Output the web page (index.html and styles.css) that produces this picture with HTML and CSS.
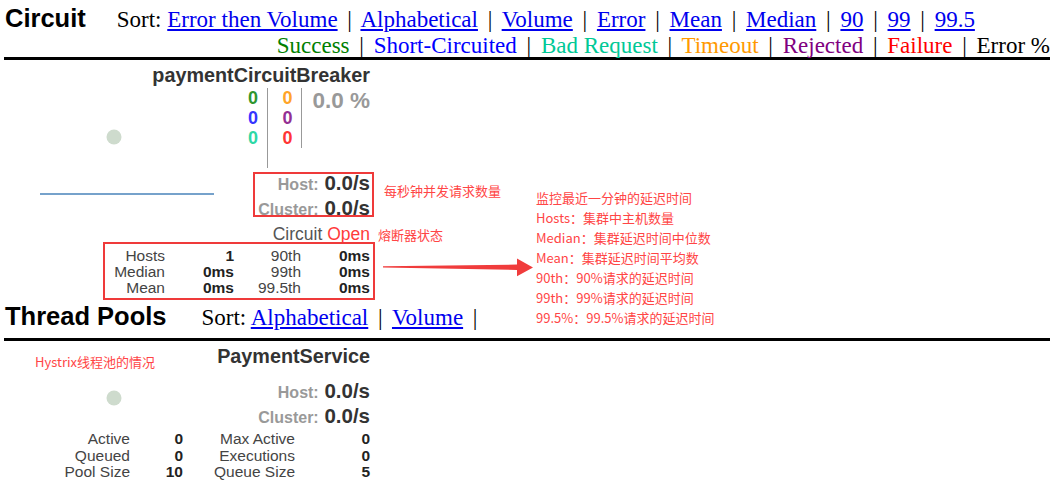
FILE: index.html
```html
<!DOCTYPE html>
<html>
<head>
<meta charset="utf-8">
<title>Hystrix Dashboard</title>
<link rel="stylesheet" href="styles.css">
</head>
<body>
<header class="section-head">
  <div class="head-row">
    <h2 class="section-title title-circuit">Circuit</h2>
    <div class="sort">Sort: <a href="#">Error then Volume</a> <span class="sep">|</span> <a href="#">Alphabetical</a> <span class="sep">|</span> <a href="#">Volume</a> <span class="sep">|</span> <a href="#">Error</a> <span class="sep">|</span> <a href="#">Mean</a> <span class="sep">|</span> <a href="#">Median</a> <span class="sep">|</span> <a href="#">90</a> <span class="sep">|</span> <a href="#">99</a> <span class="sep">|</span> <a href="#">99.5</a></div>
  </div>
  <div class="legend"><span class="l-success">Success</span> <span class="sep">|</span> <span class="l-short">Short-Circuited</span> <span class="sep">|</span> <span class="l-bad">Bad Request</span> <span class="sep">|</span> <span class="l-timeout">Timeout</span> <span class="sep">|</span> <span class="l-rejected">Rejected</span> <span class="sep">|</span> <span class="l-failure">Failure</span> <span class="sep">|</span> <span class="l-error">Error %</span></div>
</header>

<section class="monitor">
  <svg class="chart" width="370" height="160" viewBox="0 0 370 160">
    <circle cx="110" cy="77" r="7.5" fill="#cedbcd"/>
    <line x1="36" y1="134" x2="210" y2="134" stroke="#76a2cb" stroke-width="2"/>
  </svg>
  <div class="monitor-name">paymentCircuitBreaker</div>
  <div class="counters">
    <div class="counter-col col-a">
      <div class="c-success">0</div>
      <div class="c-short">0</div>
      <div class="c-bad">0</div>
      <div>&nbsp;</div>
    </div>
    <div class="counter-col col-b">
      <div class="c-timeout">0</div>
      <div class="c-rejected">0</div>
      <div class="c-failure">0</div>
    </div>
    <div class="err-pct">0.0 %</div>
  </div>
  <div class="rates">
    <div><span class="rate-label">Host:</span> <span class="rate-value">0.0/s</span></div>
    <div><span class="rate-label">Cluster:</span> <span class="rate-value">0.0/s</span></div>
  </div>
  <div class="circuit-status">Circuit <span class="open">Open</span></div>
  <div class="stats stats-circuit">
    <span class="lbl">Hosts</span><span class="val">1</span><span class="lbl">90th</span><span class="val">0ms</span>
    <span class="lbl">Median</span><span class="val">0ms</span><span class="lbl">99th</span><span class="val">0ms</span>
    <span class="lbl">Mean</span><span class="val">0ms</span><span class="lbl">99.5th</span><span class="val">0ms</span>
  </div>
</section>

<header class="section-head">
  <div class="head-row pools-row">
    <h2 class="section-title title-pools">Thread Pools</h2>
    <div class="sort">Sort: <a href="#">Alphabetical</a> <span class="sep">|</span> <a href="#">Volume</a> <span class="sep">|</span></div>
  </div>
</header>

<section class="monitor">
  <svg class="chart" width="370" height="100" viewBox="0 0 370 100">
    <circle cx="110" cy="57" r="7.5" fill="#cedbcd"/>
  </svg>
  <div class="monitor-name">PaymentService</div>
  <div class="rates pool-rates">
    <div><span class="rate-label">Host:</span> <span class="rate-value">0.0/s</span></div>
    <div><span class="rate-label">Cluster:</span> <span class="rate-value">0.0/s</span></div>
  </div>
  <div class="stats stats-pool">
    <span class="lbl">Active</span><span class="val">0</span><span class="lbl">Max Active</span><span class="val">0</span>
    <span class="lbl">Queued</span><span class="val">0</span><span class="lbl">Executions</span><span class="val">0</span>
    <span class="lbl">Pool Size</span><span class="val">10</span><span class="lbl">Queue Size</span><span class="val">5</span>
  </div>
</section>

<div class="notes">
  <div class="box box-rate"></div>
  <div class="box box-stats"></div>
  <svg class="arrow" width="160" height="24" viewBox="378 256 160 24">
    <polygon points="383,266.3 517,264.6 517,258.5 533,267.5 517,276.2 517,270 383,267.4" fill="#f03c3c"/>
  </svg>
  <div class="note note-rate">每秒钟并发请求数量</div>
  <div class="note note-circuit">熔断器状态</div>
  <div class="note note-latency">监控最近一分钟的延迟时间<br>Hosts：集群中主机数量<br>Median：集群延迟时间中位数<br>Mean：集群延迟时间平均数<br>90th：90%请求的延迟时间<br>99th：99%请求的延迟时间<br>99.5%：99.5%请求的延迟时间</div>
  <div class="note note-pool">Hystrix线程池的情况</div>
</div>
</body>
</html>
```
FILE: styles.css
```css
* { box-sizing: border-box; }

body {
  margin: 3px 2px 0 4px;
  font-family: "Liberation Sans", Arial, sans-serif;
  color: #333;
  background: #fff;
}

.section-head {
  border-bottom: 3px solid #000;
}

.head-row {
  display: flex;
  align-items: baseline;
  white-space: nowrap;
  line-height: 30px;
}

.pools-row {
  line-height: 40px;
}

.section-title {
  margin: 0;
  padding-left: 1px;
  font-family: "Liberation Sans", Arial, sans-serif;
  font-weight: bold;
  font-size: 25.5px;
  color: #000;
}

.title-circuit { margin-right: 31px; }
.title-pools { margin-right: 35px; }

.sort,
.legend {
  font-family: "Liberation Serif", "Times New Roman", serif;
  font-size: 23px;
  color: #000;
}

.sort a { color: #0000ee; }

.sep { margin: 0 4px; color: #000; }

.legend {
  text-align: right;
  line-height: 22px;
  white-space: nowrap;
}

.l-success { color: #008000; }
.l-short { color: #0000ff; }
.l-bad { color: #00c896; }
.l-timeout { color: #ff9900; }
.l-rejected { color: #800080; }
.l-failure { color: #ff0000; }
.l-error { color: #000; }

/* monitor cards */
.monitor {
  position: relative;
  width: 370px;
  padding: 3px 4px 0 0;
  text-align: right;
}

.chart {
  position: absolute;
  left: 0;
  top: 0;
}

.monitor-name {
  font-weight: bold;
  font-size: 19.8px;
  line-height: 24px;
  color: #333;
  white-space: nowrap;
}

.counters {
  display: flex;
  justify-content: flex-end;
  align-items: flex-start;
  margin-top: 1px;
  font-size: 18px;
  font-weight: bold;
  line-height: 20px;
}

.counter-col {
  text-align: right;
  border-right: 1px solid #999;
}

.col-a { padding-right: 9.5px; }
.col-b { padding: 0 9px 0 14px; }

.c-success { color: #2f962f; }
.c-short { color: #3535ff; }
.c-bad { color: #2ed8a6; }
.c-timeout { color: #ffa428; }
.c-rejected { color: #942f94; }
.c-failure { color: #ff3535; }

.err-pct {
  padding-left: 10px;
  font-weight: bold;
  font-size: 22.5px;
  line-height: 26px;
  color: #999;
  white-space: nowrap;
}

.rates {
  margin-top: 2px;
  font-size: 20.5px;
  line-height: 25px;
  white-space: nowrap;
}

.pool-rates { margin-top: 10px; }

.rate-label {
  font-weight: bold;
  font-size: 16px;
  line-height: 20px;
  color: #999;
}

.rate-value {
  font-weight: bold;
  color: #333;
}

.circuit-status {
  margin-top: 3px;
  font-size: 17.5px;
  line-height: 22px;
  color: #555;
}

.open { color: #ff3b3b; }

.stats {
  display: grid;
  margin-top: 3px;
  font-size: 15.5px;
  line-height: 16px;
}

.stats-circuit { grid-template-columns: 1fr 69px 67px 69px; }
.stats-pool { grid-template-columns: 1fr 53px 112px 75px; line-height: 16.5px; }

.stats span {
  text-align: right;
  white-space: nowrap;
}

.lbl { color: #444; }
.val { font-weight: bold; color: #222; }

/* annotation overlay */
.notes {
  position: absolute;
  left: 0;
  top: 0;
  width: 0;
  height: 0;
}

.box {
  position: absolute;
  border: 2px solid #ef3a3a;
}

.box-rate { left: 253px; top: 172px; width: 121px; height: 45px; }
.box-stats { left: 103px; top: 242px; width: 272px; height: 58px; }

.arrow {
  position: absolute;
  left: 378px;
  top: 256px;
}

.note {
  position: absolute;
  font-family: "Noto Sans CJK SC", "Liberation Sans", sans-serif;
  font-size: 13px;
  line-height: 20px;
  color: #ff4545;
  white-space: nowrap;
}

.note-rate { left: 384px; top: 181px; }
.note-circuit { left: 378px; top: 225px; }
.note-latency { left: 536px; top: 188px; }
.note-pool { left: 35px; top: 352px; }
```
